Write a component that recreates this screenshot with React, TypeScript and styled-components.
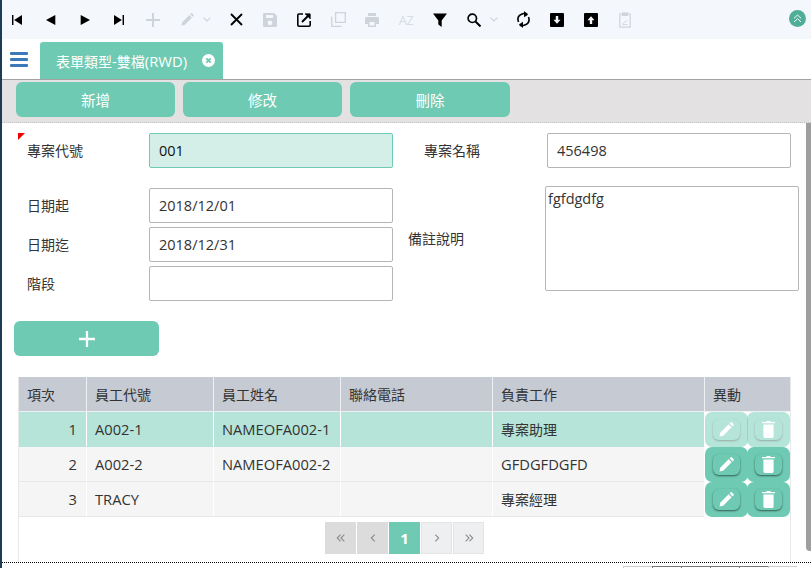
import React from 'react';
import styled, { createGlobalStyle } from 'styled-components';

const TEAL = '#6ecab2';
const OFF = '#cfd3db';

const GlobalStyle = createGlobalStyle`
  html, body {
    margin: 0;
    padding: 0;
    overflow: hidden;
    background: #fff;
    font-family: "Open Sans", "Noto Sans CJK TC", sans-serif;
    font-size: 14px;
    color: #333;
  }
  * { box-sizing: border-box; }
`;

const Page = styled.div`
  position: relative;
  width: 811px;
  height: 568px;
  overflow: hidden;
  display: flex;
  flex-direction: column;
`;

const EdgeBar = styled.div`
  position: absolute;
  left: 0;
  top: 0;
  bottom: 0;
  width: 2px;
  background: #1c3b55;
`;

const Toolbar = styled.div`
  height: 39px;
  flex: none;
  display: flex;
  align-items: center;
  background: #f4f8fc;
  position: relative;
`;

const ToolBtn = styled.span<{ $off?: boolean }>`
  width: 34px;
  height: 39px;
  flex: none;
  display: flex;
  align-items: center;
  justify-content: center;
  color: ${(p) => (p.$off ? OFF : '#000')};
`;

const SortGlyph = styled.span`
  font-size: 13px;
  letter-spacing: -0.5px;
  color: #d8dce3;
`;

const Caret = styled.span`
  width: 15px;
  height: 39px;
  flex: none;
  display: flex;
  align-items: center;
  justify-content: flex-start;
  margin-left: -1px;
  margin-right: 1px;
  color: ${OFF};
`;

const Collapse = styled.span`
  position: absolute;
  right: 5px;
  top: 10px;
  width: 17px;
  height: 17px;
  border-radius: 50%;
  background: #4fae97;
  display: flex;
  align-items: center;
  justify-content: center;
`;

const TabRow = styled.div`
  height: 41px;
  flex: none;
  display: flex;
  align-items: flex-end;
  border-bottom: 1px solid #a3a3a3;
`;

const Burger = styled.span`
  width: 40px;
  height: 37px;
  padding: 10px 0 0 10px;
  flex: none;
`;

const Tab = styled.div`
  width: 183px;
  height: 37px;
  background: ${TEAL};
  border-radius: 3px 3px 0 0;
  color: #fff;
  display: flex;
  align-items: center;
  justify-content: space-between;
  padding: 0 8px 0 16px;
  font-size: 14px;
`;

const TabLatin = styled.span`
  font-size: 14.8px;
`;

const ActionBar = styled.div`
  height: 43px;
  flex: none;
  display: flex;
  gap: 8px;
  padding: 2px 0 0 16px;
  background: #e3e1e2;
  border-bottom: 1px dotted #c4c4c4;
`;

const ActionButton = styled.button<{ $width: number }>`
  width: ${(p) => p.$width}px;
  height: 35px;
  border: 0;
  padding: 0;
  border-radius: 6px;
  background: ${TEAL};
  color: #fff;
  font: inherit;
  font-size: 14.5px;
`;

const Main = styled.div`
  height: 439px;
  flex: none;
  display: flex;
  overflow: hidden;
`;

const FormArea = styled.div`
  flex: 1;
  min-width: 0;
  padding-top: 10px;
  display: flex;
  flex-direction: column;
`;

const Scrollbar = styled.div`
  width: 5px;
  height: 428px;
  flex: none;
  background: #9e9e9e;
  border-radius: 0 0 0 4px;
`;

const TopRow = styled.div`
  display: flex;
`;

const Field = styled.div<{ $gapLeft?: number; $labelWidth?: number }>`
  position: relative;
  display: flex;
  align-items: center;
  margin-left: ${(p) => p.$gapLeft ?? 0}px;
  & > label {
    width: ${(p) => p.$labelWidth ?? 122}px;
    flex: none;
    color: #333;
    padding-bottom: 2px;
  }
`;

const RequiredMark = styled.i`
  position: absolute;
  left: -9px;
  top: 0;
  width: 0;
  height: 0;
  border-top: 7px solid #f00000;
  border-right: 7px solid transparent;
`;

const TextInput = styled.input<{ $key?: boolean }>`
  width: 244px;
  height: 35px;
  border: 1px solid ${(p) => (p.$key ? TEAL : '#b5b5b5')};
  border-radius: 2px;
  background: ${(p) => (p.$key ? '#d4efe7' : '#fff')};
  color: ${(p) => (p.$key ? '#111' : '#333')};
  padding: 0 9px;
  font: inherit;
  font-size: 14.5px;
  outline: none;
`;

const Memo = styled.textarea`
  width: 254px;
  height: 105px;
  border: 1px solid #b5b5b5;
  border-radius: 2px;
  padding: 2px;
  margin: 0;
  color: #333;
  font: inherit;
  font-size: 14.5px;
  line-height: 20px;
  resize: none;
  outline: none;
  display: block;
`;

const LowerRow = styled.div`
  display: flex;
  align-items: flex-start;
  margin-top: 18px;
`;

const LeftStack = styled.div`
  display: flex;
  flex-direction: column;
  gap: 4px;
  padding-top: 2px;
  margin-left: 27px;
`;

const AddButton = styled.button`
  width: 145px;
  height: 35px;
  margin: 20px 0 0 14px;
  flex: none;
  border: 0;
  padding: 0;
  border-radius: 6px;
  background: ${TEAL};
  color: #fff;
  display: flex;
  align-items: center;
  justify-content: center;
`;

const TableWrap = styled.div`
  width: 773px;
  margin: 21px 0 0 18px;
  flex: 1;
  border-left: 1px solid #e8e8e8;
  border-right: 1px solid #e8e8e8;
`;

const Grid = styled.table`
  width: 771px;
  table-layout: fixed;
  border-collapse: separate;
  border-spacing: 0;
`;

const Th = styled.th`
  height: 35px;
  padding: 0 8px;
  background: #c6cad3;
  border-right: 1px solid #eef0f3;
  border-bottom: 1px solid #eef0f3;
  font-weight: 400;
  font-size: 14px;
  text-align: left;
  color: #333;
  &:last-child { border-right: 0; }
`;

const Tr = styled.tr<{ $current?: boolean }>`
  & > td {
    background: ${(p) => (p.$current ? '#b6e4d9' : '#f5f5f5')};
    border-bottom: 1px solid ${(p) => (p.$current ? '#b6e4d9' : '#e8e8e8')};
  }
`;

const Td = styled.td<{ $num?: boolean; $latin?: boolean }>`
  height: 35px;
  padding: 0 ${(p) => (p.$num ? 9 : 8)}px;
  border-right: 1px solid #fff;
  text-align: ${(p) => (p.$num ? 'right' : 'left')};
  color: #333;
  font-size: ${(p) => (p.$latin ? 14.7 : 14)}px;
  white-space: nowrap;
`;

const ActionTd = styled.td`
  && {
    background: #fff;
    border-bottom: 0;
  }
  height: 35px;
  padding: 0;
`;

const Actions = styled.div`
  display: flex;
  height: 35px;
  & > span + span { margin-left: -1px; }
`;

const Slot = styled.span<{ $dim?: boolean }>`
  width: 43px;
  height: 35px;
  flex: none;
  border-radius: 7px;
  background: ${TEAL};
  opacity: ${(p) => (p.$dim ? 0.5 : 1)};
  display: flex;
  align-items: center;
  justify-content: center;
`;

const SlotButton = styled.span`
  width: 27px;
  height: 21px;
  border-radius: 6px;
  background: ${TEAL};
  box-shadow: 0 1px 2px rgba(0, 0, 0, 0.55);
  display: flex;
  align-items: center;
  justify-content: center;
`;

const Pager = styled.div`
  display: flex;
  justify-content: center;
  gap: 1px;
  margin-top: 5px;
`;

const PageCell = styled.span<{ $kind: 'off' | 'on' | 'active' }>`
  width: 31px;
  height: 32px;
  display: flex;
  align-items: center;
  justify-content: center;
  border: 1px solid ${(p) => (p.$kind === 'off' ? '#dcdcdc' : p.$kind === 'active' ? TEAL : '#e4e4e4')};
  background: ${(p) => (p.$kind === 'off' ? '#dcdcdc' : p.$kind === 'active' ? TEAL : '#eeeff1')};
  color: ${(p) => (p.$kind === 'active' ? '#fff' : p.$kind === 'off' ? '#8a8a8a' : '#8d8d8d')};
  font-weight: ${(p) => (p.$kind === 'active' ? 700 : 400)};
  font-size: 15px;
`;

const Footer = styled.div`
  flex: 1;
  border-top: 1px dotted #000;
  margin-left: 2px;
  display: flex;
  justify-content: flex-end;
  padding: 3px 14px 0 0;
`;

const FootCell = styled.span<{ $dark?: boolean }>`
  width: 29px;
  height: 4px;
  border-top: 1px solid ${(p) => (p.$dark ? '#777' : '#ccc')};
  border-left: 1px solid ${(p) => (p.$dark ? '#777' : '#ccc')};
`;

/* toolbar drawings */
const Icon: React.FC<{ size?: number; children: React.ReactNode }> = ({ size = 14, children }) => (
  <svg width={size} height={size} viewBox="0 0 14 14" fill="currentColor">
    {children}
  </svg>
);

const Chevron = () => (
  <svg width="8" height="5" viewBox="0 0 8 5" fill="none" stroke="currentColor" strokeWidth="1.1">
    <path d="M.5.7L4 4 7.500.7" />
  </svg>
);

const Pencil: React.FC<{ size?: number; color?: string }> = ({ size = 14, color = 'currentColor' }) => (
  <svg width={size} height={size} viewBox="0 0 14 14" fill={color}>
    <path d="M0.5 13.5l.6-3.4L9 2.2l2.8 2.8-7.9 7.9zM9.900 1.300l1-1q.5-.4 1 0l1.800 1.800q.4.5 0 1l-1 1z" />
  </svg>
);

const Trash = () => (
  <svg width="13" height="17" viewBox="0 0 13 17" fill="#fff">
    <path d="M4.500 0h4v1h4.500v1.200H0V1h4.500zM1.400 3.500h10.200V15.600q0 1.400-1.400 1.400H2.800q-1.400 0-1.400-1.400z" />
  </svg>
);

const Plus: React.FC<{ size?: number; width?: number }> = ({ size = 14, width = 2 }) => (
  <svg width={size} height={size} viewBox="0 0 14 14" stroke="currentColor" strokeWidth={width}>
    <path d="M7 0v14M0 7h14" />
  </svg>
);

const PagerArrow: React.FC<{ d: string }> = ({ d }) => (
  <svg width="10" height="10" viewBox="0 0 12 12" fill="none" stroke="currentColor" strokeWidth="1.300">
    <path d={d} />
  </svg>
);

const rows = [
  { no: 1, code: 'A002-1', name: 'NAMEOFA002-1', job: '專案助理', latinJob: false, current: true },
  { no: 2, code: 'A002-2', name: 'NAMEOFA002-2', job: 'GFDGFDGFD', latinJob: true, current: false },
  { no: 3, code: 'TRACY', name: '', job: '專案經理', latinJob: false, current: false },
];

export default function App() {
  return (
    <Page>
      <GlobalStyle />
      <Toolbar>
        <ToolBtn>
          <Icon size={10}><path d="M0 0h2v14H0zM14 0v14L3 7z" /></Icon>
        </ToolBtn>
        <ToolBtn>
          <Icon size={10}><path d="M13 0v14L0 7z" /></Icon>
        </ToolBtn>
        <ToolBtn>
          <Icon size={10}><path d="M1 0v14l13-7z" /></Icon>
        </ToolBtn>
        <ToolBtn>
          <Icon size={10}><path d="M0 0v14l11-7zM12 0h2v14h-2z" /></Icon>
        </ToolBtn>
        <ToolBtn $off>
          <Plus />
        </ToolBtn>
        <ToolBtn $off>
          <Pencil size={13} />
        </ToolBtn>
        <Caret><Chevron /></Caret>
        <ToolBtn>
          <svg width="13" height="13" viewBox="0 0 13 13" stroke="currentColor" strokeWidth="1.800">
            <path d="M1 1l11 11M12 1L1 12" />
          </svg>
        </ToolBtn>
        <ToolBtn $off>
          <Icon><path d="M1.500 0H11l3 3v9.500q0 1.500-1.500 1.500h-11Q0 14 0 12.500v-11Q0 0 1.500 0zM3 2v3h7V2zm4 5.600a2.300 2.300 0 1 0 0 4.600 2.300 2.300 0 0 0 0-4.600z" fillRule="evenodd" /></Icon>
        </ToolBtn>
        <ToolBtn>
          <svg width="14" height="14" viewBox="0 0 14 14" fill="none" stroke="currentColor" strokeWidth="1.600">
            <path d="M6 1H2Q.8 1 .8 2v10q0 1.200 1.200 1.200h10q1.200 0 1.200-1.200V8" />
            <path d="M5 9l7-7" strokeWidth="2" />
            <path d="M8 .9h5.100V6" fill="currentColor" strokeWidth="1" />
          </svg>
        </ToolBtn>
        <ToolBtn $off>
          <svg width="15" height="15" viewBox="0 0 15 15" fill="none" stroke="currentColor" strokeWidth="1.300">
            <path d="M4.600.7h9.700v9.700H4.600zM.7 4.500v10h10" />
          </svg>
        </ToolBtn>
        <ToolBtn $off>
          <Icon><path d="M3 0h8v3H3zM1.500 4h11Q14 4 14 5.500V11h-3v3H3v-3H0V5.500Q0 4 1.500 4zM4.500 9v3.500h5V9z" fillRule="evenodd" /></Icon>
        </ToolBtn>
        <ToolBtn $off><SortGlyph>AZ</SortGlyph></ToolBtn>
        <ToolBtn>
          <Icon><path d="M0 .5h14L8.700 7.500V14L5.300 11.500v-4z" /></Icon>
        </ToolBtn>
        <ToolBtn>
          <svg width="14" height="14" viewBox="0 0 14 14" fill="none" stroke="currentColor" strokeWidth="1.700">
            <circle cx="5.300" cy="5.300" r="4.200" />
            <path d="M8.500 8.500l5 5" strokeWidth="2" />
          </svg>
        </ToolBtn>
        <Caret><Chevron /></Caret>
        <ToolBtn>
          <svg width="13" height="17" viewBox="0 0 13 17" fill="none" stroke="currentColor" strokeWidth="1.600">
            <path d="M1.500 11Q-.5 5.500 4.500 3.300T10 3.500" />
            <path d="M11.500 6Q13.500 11.500 8.500 13.700T3 13.500" />
            <path d="M7 .3l3.700 3.400L7 6M6 11l-3.700 2.500L6 16.700" fill="currentColor" strokeWidth="0.5" />
          </svg>
        </ToolBtn>
        <ToolBtn>
          <Icon><path d="M1 0h12q1 0 1 1v12q0 1-1 1H1q-1 0-1-1V1q0-1 1-1zm4.800 3v3.800H3.500L7 10.800l3.500-4H8.200V3z" fillRule="evenodd" /></Icon>
        </ToolBtn>
        <ToolBtn>
          <Icon><path d="M1 0h12q1 0 1 1v12q0 1-1 1H1q-1 0-1-1V1q0-1 1-1zm6 3.200L3.500 7.200h2.300V11h2.400V7.200h2.300z" fillRule="evenodd" /></Icon>
        </ToolBtn>
        <ToolBtn $off>
          <svg width="12" height="16" viewBox="0 0 12 16" fill="none" stroke="currentColor" strokeWidth="1.200">
            <path d="M3.500 2H.8v13.200h10.400V2H8.500" />
            <path d="M3.500 1h5v2.500h-5z" fill="currentColor" />
            <path d="M3.500 12l5-4M3.500 12.500h5" strokeWidth="0.900" />
          </svg>
        </ToolBtn>
        <Collapse>
          <svg width="9" height="9" viewBox="0 0 9 9" fill="none" stroke="#fff" strokeWidth="1">
            <path d="M1 4.300L4.500 1 8 4.300M1 8L4.500 4.700 8 8" />
          </svg>
        </Collapse>
      </Toolbar>

      <TabRow>
        <Burger>
          <svg width="18" height="15" viewBox="0 0 18 15" fill="#3b79b9">
            <rect width="18" height="3" y="0" rx="1" />
            <rect width="18" height="3" y="6" rx="1" />
            <rect width="18" height="3" y="12" rx="1" />
          </svg>
        </Burger>
        <Tab>
          <span>
            表單類型<TabLatin>-</TabLatin>雙檔<TabLatin>(RWD)</TabLatin>
          </span>
          <svg width="13" height="13" viewBox="0 0 13 13">
            <circle cx="6.500" cy="6.500" r="6.500" fill="#fff" />
            <path d="M4.300 4.300l4.400 4.400M8.700 4.300L4.300 8.700" stroke={TEAL} strokeWidth="1.800" />
          </svg>
        </Tab>
      </TabRow>

      <ActionBar>
        <ActionButton $width={159}>新增</ActionButton>
        <ActionButton $width={159}>修改</ActionButton>
        <ActionButton $width={160}>刪除</ActionButton>
      </ActionBar>

      <Main>
        <FormArea>
          <TopRow>
            <Field $gapLeft={27}>
              <RequiredMark />
              <label>專案代號</label>
              <TextInput $key readOnly value="001" />
            </Field>
            <Field $gapLeft={31} $labelWidth={123}>
              <label>專案名稱</label>
              <TextInput readOnly value="456498" />
            </Field>
          </TopRow>

          <LowerRow>
            <LeftStack>
              <Field>
                <label>日期起</label>
                <TextInput readOnly value="2018/12/01" />
              </Field>
              <Field>
                <label>日期迄</label>
                <TextInput readOnly value="2018/12/31" />
              </Field>
              <Field>
                <label>階段</label>
                <TextInput readOnly value="" />
              </Field>
            </LeftStack>
            <Field $gapLeft={15} $labelWidth={137}>
              <label>備註說明</label>
              <Memo readOnly value="fgfdgdfg" />
            </Field>
          </LowerRow>

          <AddButton aria-label="add">
            <Plus size={16} width={2} />
          </AddButton>

          <TableWrap>
            <Grid>
              <colgroup>
                <col width={68} />
                <col width={127} />
                <col width={127} />
                <col width={152} />
                <col width={212} />
                <col width={85} />
              </colgroup>
              <thead>
                <tr>
                  <Th>項次</Th>
                  <Th>員工代號</Th>
                  <Th>員工姓名</Th>
                  <Th>聯絡電話</Th>
                  <Th>負責工作</Th>
                  <Th>異動</Th>
                </tr>
              </thead>
              <tbody>
                {rows.map((r) => (
                  <Tr key={r.no} $current={r.current}>
                    <Td $num $latin>{r.no}</Td>
                    <Td $latin>{r.code}</Td>
                    <Td $latin>{r.name}</Td>
                    <Td />
                    <Td $latin={r.latinJob}>{r.job}</Td>
                    <ActionTd>
                      <Actions>
                        <Slot $dim={r.current}>
                          <SlotButton><Pencil size={15} color="#fff" /></SlotButton>
                        </Slot>
                        <Slot $dim={r.current}>
                          <SlotButton><Trash /></SlotButton>
                        </Slot>
                      </Actions>
                    </ActionTd>
                  </Tr>
                ))}
              </tbody>
            </Grid>
            <Pager>
              <PageCell $kind="off"><PagerArrow d="M5.500 2L1.500 6l4 4M10 2L6 6l4 4" /></PageCell>
              <PageCell $kind="off"><PagerArrow d="M8 2L4 6l4 4" /></PageCell>
              <PageCell $kind="active">1</PageCell>
              <PageCell $kind="on"><PagerArrow d="M4 2l4 4-4 4" /></PageCell>
              <PageCell $kind="on"><PagerArrow d="M2 2l4 4-4 4M6.500 2l4 4-4 4" /></PageCell>
            </Pager>
          </TableWrap>
        </FormArea>
        <Scrollbar />
      </Main>

      <Footer>
        <FootCell />
        <FootCell $dark />
        <FootCell $dark />
        <FootCell $dark />
        <FootCell $dark />
        <FootCell />
      </Footer>
      <EdgeBar />
    </Page>
  );
}
